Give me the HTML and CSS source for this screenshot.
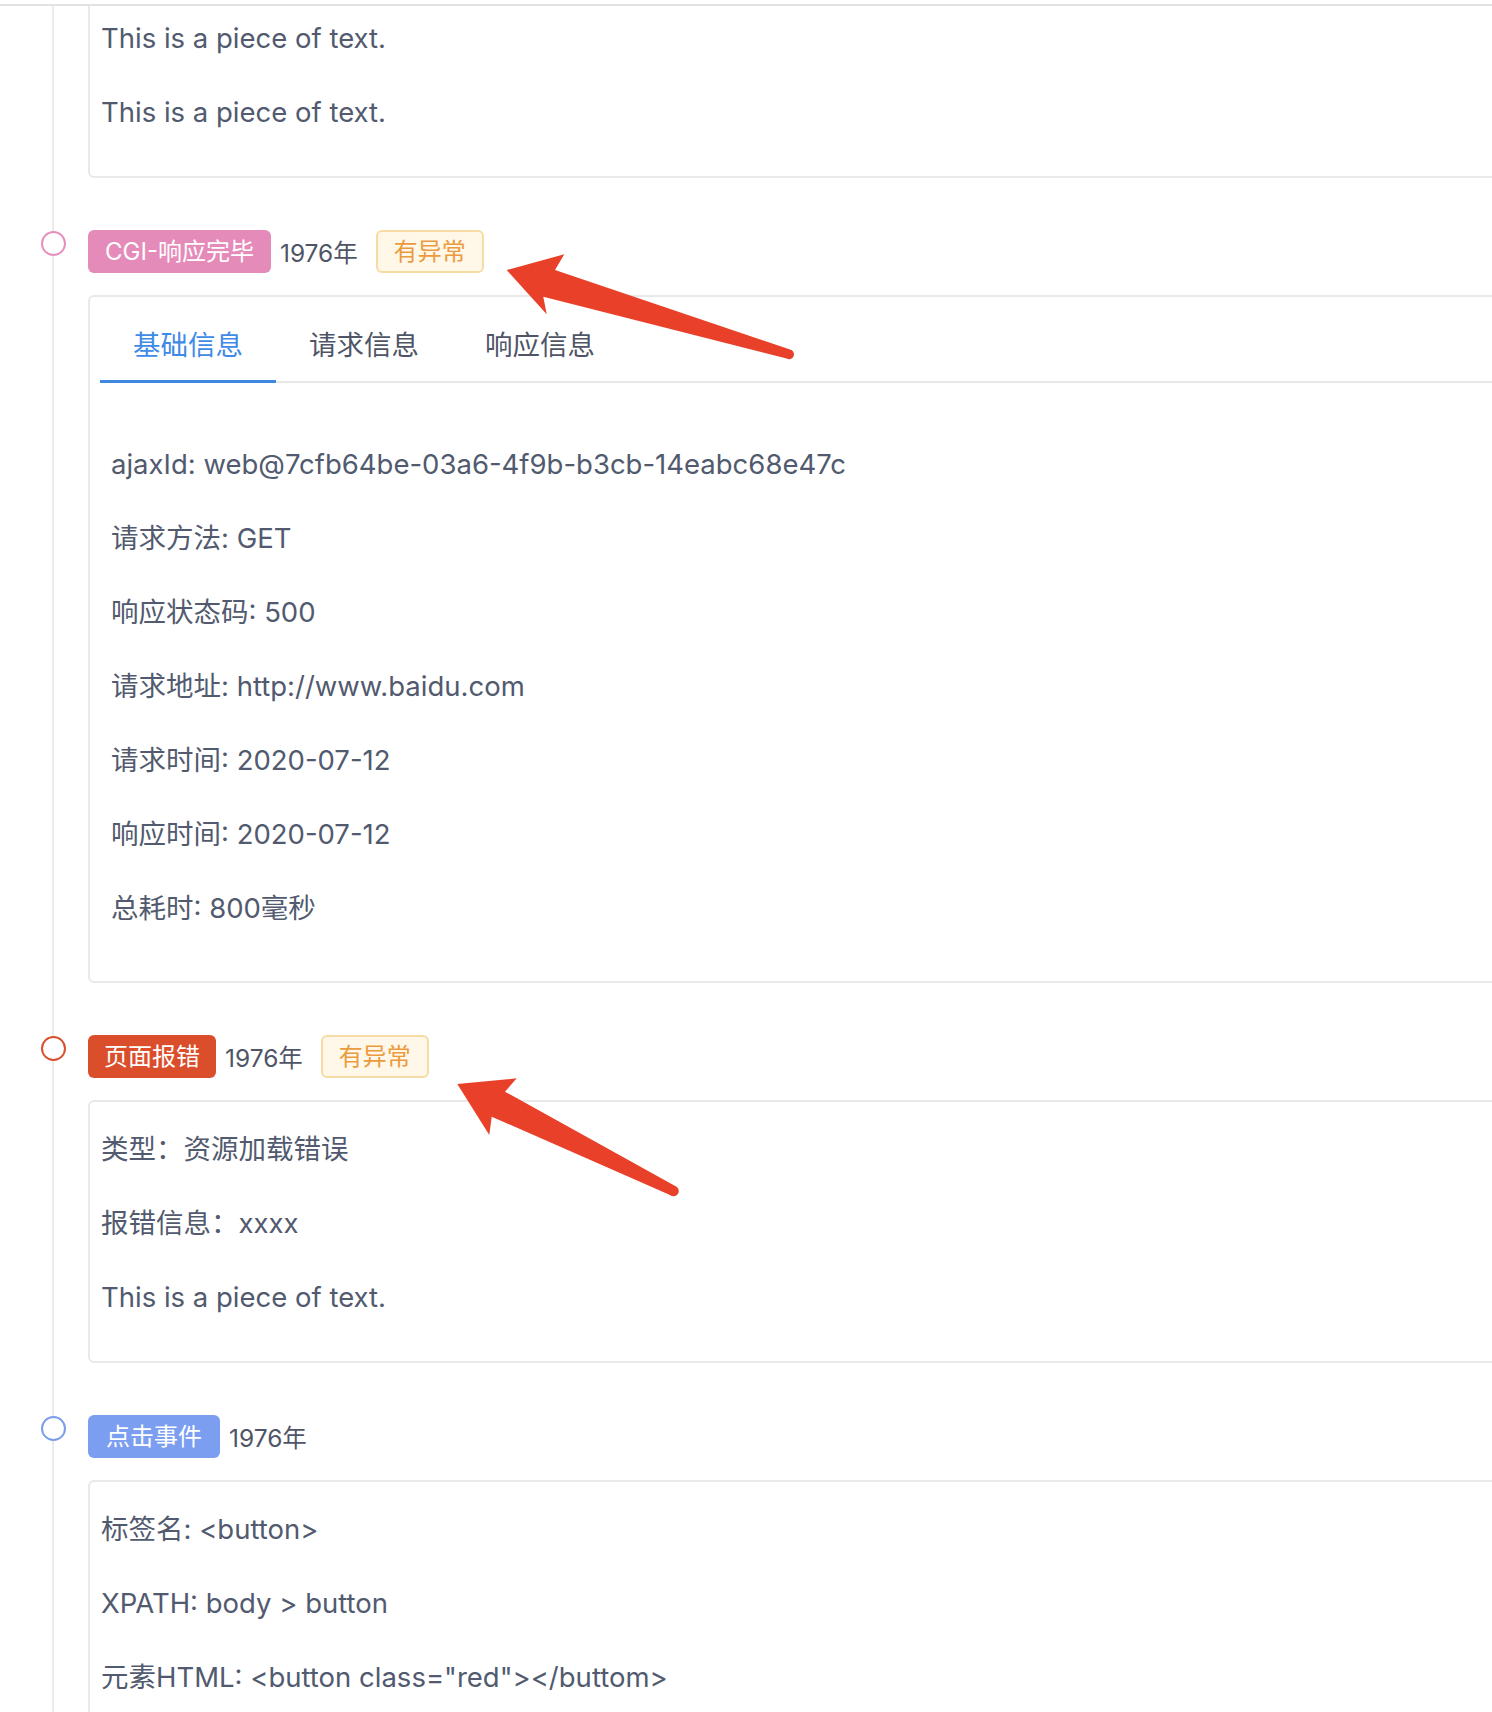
FILE: index.html
```html
<!DOCTYPE html>
<html lang="zh-CN">
  <head>
    <meta charset="UTF-8" />
    <meta name="viewport" content="width=device-width, initial-scale=1.0" />
    <title>Timeline</title>
    <link rel="stylesheet" href="styles.css">
  </head>
  <body>
    <div class="topline"></div>

    <div class="timeline">
      <div class="item">
        <div class="card card-cut">
          <p>This is a piece of text.</p>
          <p>This is a piece of text.</p>
        </div>
      </div>

      <div class="item">
        <span class="dot dot-pink"></span>
        <div class="item-head">
          <span class="tag tag-pink">CGI-响应完毕</span>
          <span class="time">1976年</span>
          <span class="tag-warn">有异常</span>
        </div>
        <div class="card card-tabs">
          <div class="tabs-nav">
            <div class="tab active">基础信息</div>
            <div class="tab">请求信息</div>
            <div class="tab">响应信息</div>
          </div>
          <div class="tab-pane">
            <p>ajaxId: web@7cfb64be-03a6-4f9b-b3cb-14eabc68e47c</p>
            <p>请求方法: GET</p>
            <p>响应状态码: 500</p>
            <p>请求地址: http://www.baidu.com</p>
            <p>请求时间: 2020-07-12</p>
            <p>响应时间: 2020-07-12</p>
            <p>总耗时: 800毫秒</p>
          </div>
        </div>
      </div>

      <div class="item">
        <span class="dot dot-red"></span>
        <div class="item-head">
          <span class="tag tag-red">页面报错</span>
          <span class="time">1976年</span>
          <span class="tag-warn">有异常</span>
        </div>
        <div class="card">
          <p>类型：资源加载错误</p>
          <p>报错信息：xxxx</p>
          <p>This is a piece of text.</p>
        </div>
      </div>

      <div class="item">
        <span class="dot dot-blue"></span>
        <div class="item-head">
          <span class="tag tag-blue">点击事件</span>
          <span class="time">1976年</span>
        </div>
        <div class="card">
          <p>标签名: &lt;button&gt;</p>
          <p>XPATH: body &gt; button</p>
          <p>元素HTML: &lt;button class="red"&gt;&lt;/buttom&gt;</p>
          <p>&nbsp;</p>
        </div>
      </div>
    </div>

    <!-- annotation arrows drawn on top of the screenshot -->
    <svg class="marks" width="1492" height="1712" viewBox="0 0 1492 1712">
      <path d="M506.7 270 L564.3 254.3 L555 270 L791.5 350 A 4.8 4.8 0 0 1 786.7 358.5 L543.3 296.7 L546.7 314.3 Z" fill="#e9402a" />
      <path d="M457.3 1084 L516.7 1078.3 L505 1091.7 L677 1187 A 4.6 4.6 0 0 1 670 1195 L491.7 1116.7 L489.3 1135 Z" fill="#e9402a" />
    </svg>
  </body>
</html>
```

FILE: styles.css
```css
html,
body {
  height: 1712px;
  overflow: hidden;
}

body {
  margin: 0;
  padding: 0;
  background: #fff;
  font-family: Inter, "Noto Sans CJK SC", sans-serif;
  color: #515a6e;
  position: relative;
}

.topline {
  height: 4px;
  border-bottom: 2px solid #e2e2e2;
}

.timeline {
  margin-left: 52px;
  border-left: 2px solid #ebebeb;
}

.item {
  position: relative;
  padding-left: 34px;
  margin-top: 52px;
}

.item:first-child {
  margin-top: 0;
}

.dot {
  position: absolute;
  left: -13px;
  top: 1px;
  width: 25px;
  height: 25px;
  box-sizing: border-box;
  border-radius: 50%;
  border: 2px solid #ccc;
  background: #fff;
}

.dot-pink {
  border-color: #e68fbd;
}

.dot-red {
  border-color: #d8502e;
}

.dot-blue {
  border-color: #7c9de9;
}

.item-head {
  display: flex;
  align-items: center;
  height: 43px;
  margin-bottom: 22px;
}

.tag {
  display: inline-block;
  height: 43px;
  line-height: 43px;
  padding: 0 17px;
  border-radius: 6px;
  color: #fff;
  font-size: 24px;
  margin-right: 9px;
}

.tag-pink {
  background: #e58bba;
}

.tag-red {
  background: #db4e2b;
  padding: 0 16px;
}

.tag-blue {
  background: #7c9ef0;
  padding: 0 18px;
}

.time {
  font-size: 24.5px;
  color: #4f5566;
  margin-right: 18px;
}

.tag-warn {
  display: inline-block;
  box-sizing: border-box;
  height: 43px;
  line-height: 39px;
  padding: 0 16px;
  border: 2px solid #f7dba4;
  border-radius: 6px;
  background: #fff7e8;
  color: #eb9b3f;
  font-size: 24px;
}

.card {
  border: 2px solid #e9e9e9;
  border-radius: 6px;
  margin-right: -40px;
  padding: 27px 11px 10px;
  font-size: 27.5px;
}

.card p {
  margin: 0 0 34px;
  line-height: 40px;
}

.card-cut {
  border-top: none;
  border-radius: 0 0 6px 6px;
  padding-top: 12px;
}

.card-tabs {
  padding-top: 0;
}

.tabs-nav {
  display: flex;
  padding-top: 28px;
  margin-left: -1px;
  border-bottom: 2px solid #e8e8e8;
}

.tab {
  padding: 0 33px 15px;
  line-height: 40px;
  font-size: 27.5px;
  color: #4f5566;
  border-bottom: 3px solid transparent;
  margin-bottom: -2px;
}

.tab.active {
  color: #3f8ae6;
  border-bottom-color: #3f88e0;
}

.tab-pane {
  padding: 61px 10px 9px;
}

.marks {
  position: absolute;
  left: 0;
  top: 0;
  pointer-events: none;
}
```
